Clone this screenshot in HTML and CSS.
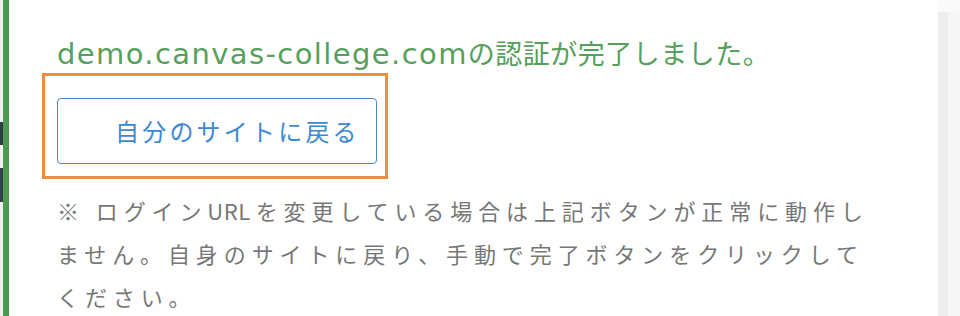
FILE: index.html
```html
<!DOCTYPE html>
<html lang="ja">
<head>
    <meta charset="UTF-8">
    <meta name="viewport" content="width=device-width, initial-scale=1.0">
    <title>認証完了</title>
    <link rel="stylesheet" href="styles.css">
</head>
<body>

    <div class="page">
        <div class="edge">
            <span class="edge-block edge-block-1"></span>
            <span class="edge-block edge-block-2"></span>
        </div>

        <div class="notice">
            <p class="notice-title"><span class="domain">demo.canvas-college.com</span>の認証が完了しました。</p>
            <div class="highlight">
                <a class="back-button" href="#">自分のサイトに戻る</a>
            </div>
            <p class="notice-note">※ ログイン<span class="latin">URL</span>を変更している場合は上記ボタンが正常に動作しません。自身のサイトに戻り、手動で完了ボタンをクリックしてください。</p>
        </div>

        <div class="side">
            <div class="side-panel"></div>
        </div>
    </div>

</body>
</html>
```

FILE: styles.css
```css
body {
    margin: 0;
    padding: 0;
    background-color: #fff;
    font-family: "Noto Sans CJK JP", "Noto Sans", sans-serif;
    color: #777;
}
.page {
    display: flex;
    height: 316px;
    overflow: hidden;
}
.edge {
    width: 3px;
    flex-shrink: 0;
    background-color: #eef2ee;
    display: flex;
    flex-direction: column;
}
.edge-block {
    display: block;
    background-color: #2e3d3e;
}
.edge-block-1 {
    margin-top: 122px;
    height: 23px;
}
.edge-block-2 {
    margin-top: 23px;
    height: 34px;
    background-color: #2c4148;
}
.notice {
    flex: 1;
    background-color: #fff;
    border-left: 6px solid #4f9a52;
    padding: 36px 0 0 48px;
}
.notice-title {
    margin: 0;
    font-family: "DejaVu Sans", "Noto Sans CJK JP", sans-serif;
    font-size: 27px;
    line-height: 36px;
    letter-spacing: 0.5px;
    color: #56a05c;
}
.notice-title .domain {
    font-size: 29px;
    letter-spacing: 1.4px;
}
.highlight {
    display: inline-block;
    margin-left: -15px;
    padding: 22px 8px 12px 12px;
    border: 3px solid #ef8d3f;
}
.back-button {
    display: block;
    box-sizing: border-box;
    width: 320px;
    height: 66px;
    padding-left: 57px;
    border: 1px solid #4289cd;
    border-radius: 4px;
    color: #3d89d0;
    font-size: 24px;
    line-height: 64px;
    letter-spacing: 3.2px;
    text-decoration: none;
}
.notice-note {
    margin: 10px 0 0;
    width: 828px;
    font-size: 22px;
    line-height: 43px;
    letter-spacing: 5.9px;
    color: #777;
}
.notice-note .latin {
    letter-spacing: 0.5px;
    margin-right: 5px;
}
.side {
    width: 22px;
    flex-shrink: 0;
    padding-top: 12px;
    background-color: #fafafa;
}
.side-panel {
    height: 100%;
    border-left: 10px solid #ededed;
    background-color: #f6f6f6;
}
```
